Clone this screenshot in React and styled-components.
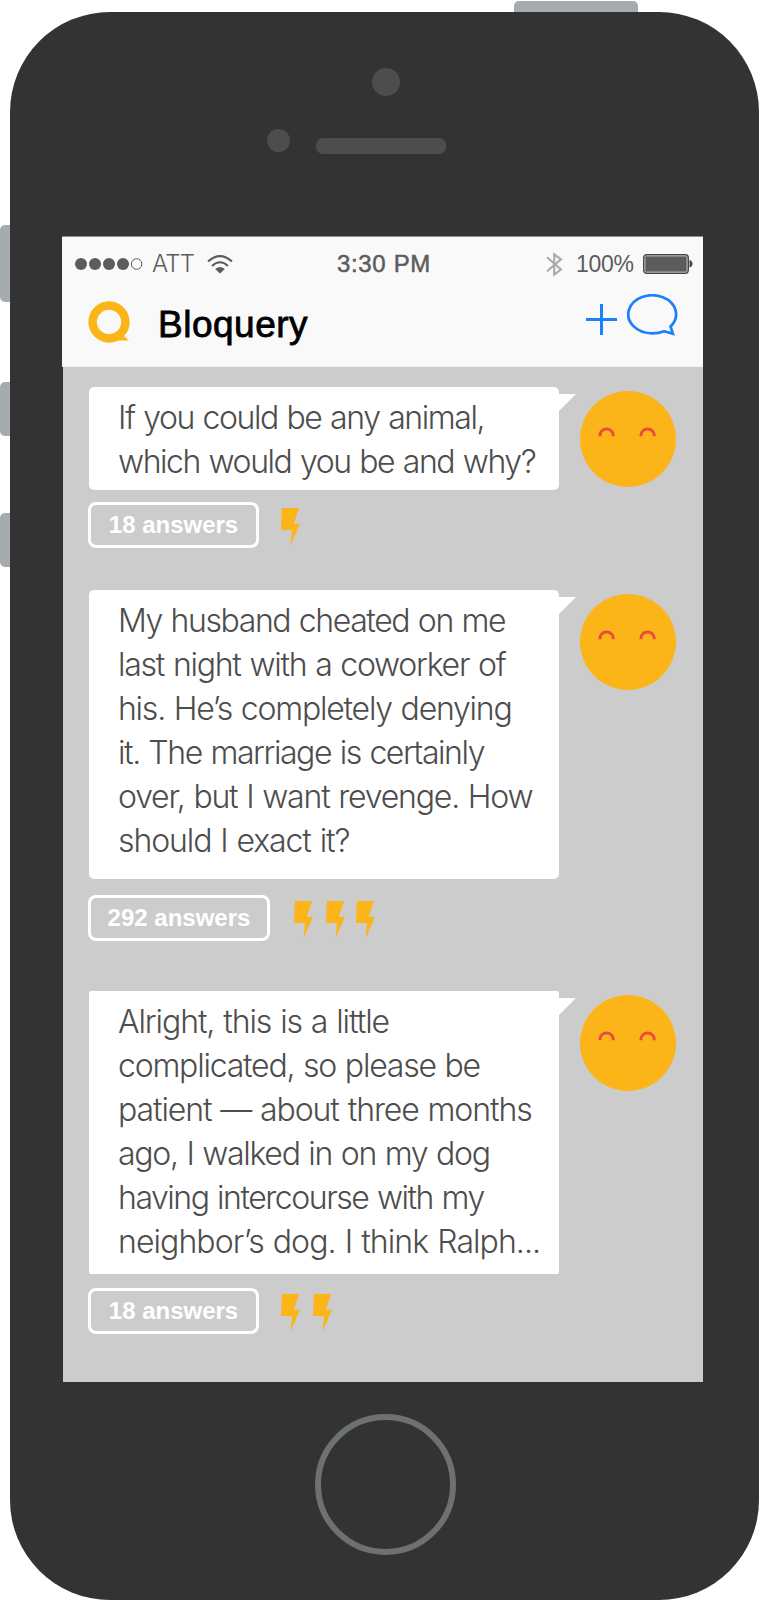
import React from "react";
import styled, { createGlobalStyle } from "styled-components";

const Global = createGlobalStyle`
  *{box-sizing:border-box}
  body{margin:0;background:#fff;font-family:Inter,"Liberation Sans",sans-serif}
  svg{display:block;flex:none}
`;
const Stage = styled.main`
  position:relative;width:760px;height:1600px;overflow:hidden;padding:12px 0 0 10px;
`;
const Key = styled.i`
  position:absolute;background:#a6acae;
  left:${p => p.$x}px;top:${p => p.$y}px;width:${p => p.$w}px;height:${p => p.$h}px;
  border-radius:5px;
`;
const Phone = styled.div`
  position:relative;width:749px;height:1588px;border-radius:100px;background:#333;
  display:flex;flex-direction:column;padding-left:52px;
`;
const Forehead = styled.div`
  height:224px;display:flex;flex-direction:column;padding-top:56px;
`;
const Camera = styled.div`
  width:28px;height:28px;border-radius:50%;background:#4d4d4d;margin-left:310px;
`;
const SpeakerRow = styled.div`
  display:flex;align-items:flex-start;margin:33px 0 0 205px;gap:26px;
`;
const Sensor = styled.div`width:23px;height:23px;border-radius:50%;background:#4d4d4d;`;
const Speaker = styled.div`width:130px;height:16px;border-radius:7px;background:#4d4d4d;margin-top:9px;`;
const Screen = styled.div`width:641px;height:1146px;display:flex;flex-direction:column;`;
const Header = styled.header`
  height:131px;background:#f9f9f9;border-top:1px solid #8e8e8e;border-bottom:1px solid #eee;
`;
const StatusBar = styled.div`
  height:53px;display:flex;align-items:center;padding:1px 10px 0 13px;color:#5c5c5c;
`;
const Dots = styled.svg`margin-bottom:1px;`;
const Wifi = styled.svg`margin-left:13px;`;
const Bluetooth = styled.svg`margin-left:auto;`;
const Carrier = styled.span`font:300 24px/28px Inter,sans-serif;letter-spacing:-.8px;width:42px;margin-left:9px;white-space:nowrap;`;
const Clock = styled.span`
  font:500 24px/28px "Liberation Sans",sans-serif;width:96px;margin-left:104px;white-space:nowrap;
  letter-spacing:.65px;-webkit-text-stroke:.5px #5c5c5c;
`;
const Percent = styled.span`font:400 23px/28px "Liberation Sans",sans-serif;width:58px;margin:0 9px 0 13px;white-space:nowrap;letter-spacing:-.3px;`;
const NavBar = styled.div`height:76px;display:flex;align-items:flex-start;padding:0 25px 0 26px;`;
const LogoBox = styled.div`padding-top:11px;`;
const Title = styled.h1`
  margin:14px 0 0 28px;font:400 37px/42px "Liberation Sans",sans-serif;color:#000;
  -webkit-text-stroke:.8px #000;letter-spacing:.5px;flex:1;
`;
const Actions = styled.div`display:flex;gap:10px;padding-top:4px;`;
const Feed = styled.section`
  flex:1;margin-left:1px;background:#ccc;padding:20px 25px 0 26px;display:flex;flex-direction:column;
`;
const Post = styled.article`height:${p => p.$h}px;`;
const PostTop = styled.div`display:flex;align-items:flex-start;`;
const Bubble = styled.div`
  position:relative;width:470px;height:${p => p.$h}px;background:#fff;border-radius:${p => p.$r}px;
  padding:9px 0 0 29px;color:#4d4d4d;
`;
const Tail = styled.svg`position:absolute;left:469px;top:7px;`;
const Line = styled.span`
  display:block;height:44px;font:300 32px/44px Inter,"Liberation Sans",sans-serif;
  white-space:nowrap;word-spacing:1px;letter-spacing:${p => p.$ls}px;
`;
const Avatar = styled.svg`margin:4px 0 0 21px;`;
const Footer = styled.div`display:flex;align-items:flex-start;margin:${p => p.$mt}px 0 0 -1px;`;
const Answers = styled.button`
  width:${p => p.$w}px;height:46px;border:3px solid #fff;border-radius:8px;background:none;
  padding:0 0 2px;color:#fff;font:700 24px/40px "Liberation Sans",sans-serif;white-space:nowrap;
`;
const Bolts = styled.div`
  display:flex;gap:13px;margin:6px 0 0 ${p => p.$ml}px;
  svg:nth-child(3){margin-left:-2px}
`;
const Home = styled.div`
  width:141px;height:141px;border:6px solid #6d7171;border-radius:50%;margin:32px 0 0 252.5px;
`;

const Face = () => (
  <Avatar width="96" height="96" viewBox="0 0 96 96">
    <circle cx="48" cy="48" r="48" fill="#fbb519" />
    <g fill="none" stroke="#e84c3d" strokeWidth="3">
      <path d="M20 45.3V44a6.6 6 0 0 1 13.2 0v1.3" />
      <path d="M61 45.3V44a6.6 6 0 0 1 13.2 0v1.3" />
    </g>
  </Avatar>
);
const Bolt = () => (
  <svg width="19" height="38" viewBox="0 0 19 38"><path d="M.8 0H18.2L12.7 15.7H19L9.6 37.5 11 22H0Z" fill="#fbb519" /></svg>
);

const posts = [
  { h: 203, box: 103, r: 5, mt: 12, w: 171, ml: 22, n: 1, label: "18 answers",
    lines: [["If you could be any animal,", -1.41], ["which would you be and why?", -1.43]] },
  { h: 401, box: 289, r: 5, mt: 16, w: 182, ml: 24, n: 3, label: "292 answers",
    lines: [["My husband cheated on me", -1.4], ["last night with a coworker of", -1.24], ["his. He’s completely denying", -1.23],
      ["it. The marriage is certainly", -1.42], ["over, but I want revenge. How", -1.2], ["should I exact it?", -1.1]] },
  { h: 380, box: 283, r: 2, mt: 14, w: 171, ml: 22, n: 2, label: "18 answers",
    lines: [["Alright, this is a little", -1.09], ["complicated, so please be", -1.22], ["patient — about three months", -1.1],
      ["ago, I walked in on my dog", -1.29], ["having intercourse with my", -1.46], ["neighbor’s dog. I think Ralph...", -0.93]] },
];

export default function App() {
  return (
    <Stage>
      <Global />
      <Key $x={514} $y={1} $w={124} $h={20} />
      <Key $x={0} $y={225} $w={20} $h={77} />
      <Key $x={0} $y={382} $w={20} $h={54} />
      <Key $x={0} $y={513} $w={20} $h={54} />
      <Phone>
        <Forehead>
          <Camera />
          <SpeakerRow><Sensor /><Speaker /></SpeakerRow>
        </Forehead>
        <Screen>
          <Header>
            <StatusBar>
              <Dots width="68" height="14" viewBox="0 0 68 14" fill="#5c5c5c">
                <circle cx="6" cy="7" r="6" /><circle cx="20" cy="7" r="6" /><circle cx="34" cy="7" r="6" /><circle cx="48" cy="7" r="6" />
                <circle cx="61.6" cy="7" r="5.3" fill="none" stroke="#5c5c5c" />
              </Dots>
              <Carrier>ATT</Carrier>
              <Wifi width="26" height="19" viewBox="0 0 26 19" fill="none" stroke="#5c5c5c" strokeWidth="2">
                <path d="M1 6.6Q13-4.3 25 6.6M5 11Q13 3.6 21 11" /><path d="M8.2 14Q13 10.2 17.8 14L13 18.6Z" fill="#5c5c5c" stroke="none" />
              </Wifi>
              <Clock>3:30 PM</Clock>
              <Bluetooth width="17" height="25" viewBox="0 0 17 25">
                <path d="M1 5.3 15 17.5 8.2 22.6V2.4L15 7.3 1 19.3" fill="none" stroke="#aaa" strokeWidth="2.1" />
              </Bluetooth>
              <Percent>100%</Percent>
              <svg width="50" height="20" viewBox="0 0 50 20">
                <rect x=".7" y=".7" width="44.6" height="18.6" rx="3" fill="#5c5c5c" stroke="#444" strokeWidth="1.3" />
                <rect x="1.9" y="1.9" width="42.2" height="16.2" rx="1.5" fill="none" stroke="#ddd" strokeWidth=".8" />
                <path d="M46.5 6Q49.5 7 49.5 9.8T46.5 13.5Z" fill="#444" />
              </svg>
            </StatusBar>
            <NavBar>
              <LogoBox>
                <svg width="42" height="42" viewBox="0 0 42 42" fill="#fbb519">
                  <circle cx="21" cy="21" r="16.4" fill="none" stroke="#fbb519" strokeWidth="8.5" />
                  <path d="M36 35 41 39.5H25Z" />
                </svg>
              </LogoBox>
              <Title>Bloquery</Title>
              <Actions>
                <svg width="31" height="42" viewBox="0 0 31 42"><path d="M0 25.5H31M15.5 10V41" stroke="#1c80fa" strokeWidth="3" /></svg>
                <svg width="51" height="43" viewBox="0 0 51 43">
                  <path d="M43.5 32.5A23.9 19 0 1 0 25.2 39.3Q32 39.3 37 37.2L45.9 39.8 43.5 32.5Z" fill="none" stroke="#1c80fa" strokeWidth="2.7" />
                </svg>
              </Actions>
            </NavBar>
          </Header>
          <Feed>
            {posts.map((p, i) => (
              <Post key={i} $h={p.h}>
                <PostTop>
                  <Bubble $h={p.box} $r={p.r}>
                    {p.lines.map(([t, ls]) => <Line key={t} $ls={ls}>{t}</Line>)}
                    <Tail width="18" height="18"><path d="M0 0H18L0 18Z" fill="#fff" /></Tail>
                  </Bubble>
                  <Face />
                </PostTop>
                <Footer $mt={p.mt}>
                  <Answers $w={p.w}>{p.label}</Answers>
                  <Bolts $ml={p.ml}>{Array.from({ length: p.n }, (_, k) => <Bolt key={k} />)}</Bolts>
                </Footer>
              </Post>
            ))}
          </Feed>
        </Screen>
        <Home />
      </Phone>
    </Stage>
  );
}
